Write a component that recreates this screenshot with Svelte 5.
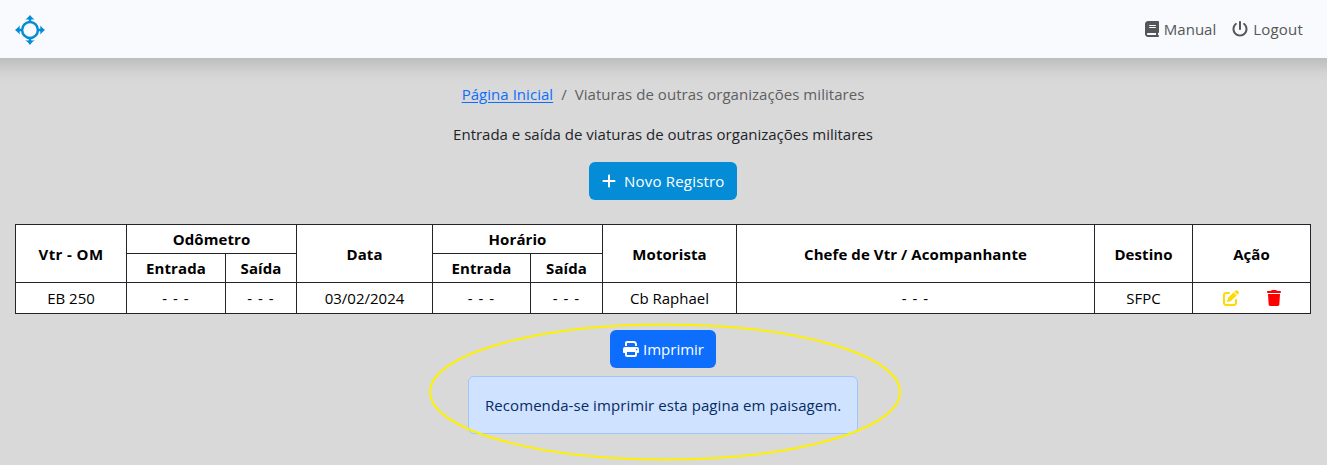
<script>
  const icons = {
    book: ['0 0 448 512', 'M96 0C43 0 0 43 0 96V416c0 53 43 96 96 96H384h32c17.7 0 32-14.3 32-32s-14.3-32-32-32V384c17.7 0 32-14.3 32-32V32c0-17.7-14.3-32-32-32H384 96zm0 384H352v64H96c-17.7 0-32-14.3-32-32s14.3-32 32-32zm32-240c0-8.8 7.2-16 16-16H336c8.8 0 16 7.2 16 16s-7.2 16-16 16H144c-8.8 0-16-7.2-16-16zm16 48H336c8.8 0 16 7.2 16 16s-7.2 16-16 16H144c-8.8 0-16-7.2-16-16s7.2-16 16-16z'],
    power: ['0 0 512 512', 'M288 32c0-17.7-14.3-32-32-32s-32 14.3-32 32V256c0 17.7 14.3 32 32 32s32-14.3 32-32V32zM143.5 120.6c13.6-11.3 15.4-31.5 4.1-45.1s-31.5-15.4-45.1-4.1C49.7 115.4 16 181.8 16 256c0 132.5 107.5 240 240 240s240-107.5 240-240c0-74.2-33.8-140.6-86.6-184.6c-13.6-11.3-33.8-9.4-45.1 4.1s-9.4 33.8 4.1 45.1c38.9 32.3 63.5 81 63.5 135.4c0 97.2-78.8 176-176 176s-176-78.8-176-176c0-54.4 24.7-103.1 63.5-135.4z'],
    plus: ['0 0 448 512', 'M256 80c0-17.7-14.3-32-32-32s-32 14.3-32 32V224H48c-17.7 0-32 14.3-32 32s14.3 32 32 32H192V432c0 17.7 14.3 32 32 32s32-14.3 32-32V288H400c17.7 0 32-14.3 32-32s-14.3-32-32-32H256V80z'],
    printer: ['0 0 512 512', 'M128 0C92.7 0 64 28.7 64 64v96h64V64H354.7L384 93.3V160h64V93.3c0-17-6.7-33.3-18.7-45.3L400 18.7C388 6.7 371.7 0 354.7 0H128zM384 352v32 64H128V384 368 352H384zm64 32h32c17.7 0 32-14.3 32-32V256c0-35.3-28.7-64-64-64H64c-35.3 0-64 28.7-64 64v96c0 17.7 14.3 32 32 32H64v64c0 35.3 28.7 64 64 64H384c35.3 0 64-28.7 64-64V384zM432 248a24 24 0 1 1 0 48 24 24 0 1 1 0-48z'],
    edit: ['0 0 512 512', 'M471.6 21.7c-21.9-21.9-57.3-21.9-79.2 0L362.3 51.7l97.9 97.9 30.1-30.1c21.9-21.9 21.9-57.3 0-79.2L471.6 21.7zm-299.2 220c-6.1 6.1-10.8 13.6-13.5 21.9l-29.6 88.8c-2.9 8.6-.6 18.1 5.8 24.6s15.9 8.7 24.6 5.8l88.8-29.6c8.2-2.7 15.7-7.4 21.9-13.5L437.7 172.3 339.7 74.3 172.4 241.7zM96 64C43 64 0 107 0 160V416c0 53 43 96 96 96H352c53 0 96-43 96-96V320c0-17.7-14.3-32-32-32s-32 14.3-32 32v96c0 17.7-14.3 32-32 32H96c-17.7 0-32-14.3-32-32V160c0-17.7 14.3-32 32-32h96c17.7 0 32-14.3 32-32s-14.3-32-32-32H96z'],
    trash: ['0 0 448 512', 'M135.2 17.7L128 32H32C14.3 32 0 46.3 0 64S14.3 96 32 96H416c17.7 0 32-14.3 32-32s-14.3-32-32-32H320l-7.2-14.3C307.4 6.8 296.3 0 284.2 0H163.8c-12.1 0-23.2 6.8-28.6 17.7zM416 128H32L53.2 467c1.6 25.3 22.6 45 47.9 45H346.9c25.3 0 46.3-19.7 47.9-45L416 128z']
  };
  const columns = [111, 99, 71, 136, 98, 72, 134, 358, 98, 118];
  const rows = [['EB 250', '- - -', '- - -', '03/02/2024', '- - -', '- - -', 'Cb Raphael', '- - -', 'SFPC']];
</script>

{#snippet icon(name)}
  <svg class="icon {name}" viewBox={icons[name][0]} aria-hidden="true"><path d={icons[name][1]} /></svg>
{/snippet}

<div class="page">
  <header>
    <svg class="logo" viewBox="0 0 30 30" aria-hidden="true">
      <circle cx="15" cy="15" r="7.9" fill="none" stroke="#048cd7" stroke-width="2.5" />
      <g fill="#048cd7">
        {#each [0, 90, 180, 270] as angle}
          <path transform="rotate({angle} 15 15)" d="M15 0C15.9 1.2 17.3 2.7 19.6 4.9C18.3 4.5 17.1 4.5 16.2 4.8V7.5H13.8V4.8C12.9 4.5 11.7 4.5 10.4 4.9C12.7 2.7 14.1 1.2 15 0Z" />
        {/each}
      </g>
    </svg>
    <nav>
      <a href="#manual">{@render icon('book')}<span>Manual</span></a>
      <a href="#logout">{@render icon('power')}<span class="logout">Logout</span></a>
    </nav>
  </header>

  <main>
    <div class="breadcrumb">
      <a href="#inicio">Página Inicial</a><span class="slash">/</span><span>Viaturas de outras organizações militares</span>
    </div>
    <p class="title">Entrada e saída de viaturas de outras organizações militares</p>
    <button class="new">{@render icon('plus')}<span>Novo Registro</span></button>

    <table>
      <colgroup>
        {#each columns as width}<col style="width: {width}px" />{/each}
      </colgroup>
      <thead>
        <tr>
          <th class="vehicle" rowspan="2">Vtr - OM</th>
          <th colspan="2">Odômetro</th>
          <th rowspan="2">Data</th>
          <th colspan="2">Horário</th>
          <th rowspan="2">Motorista</th>
          <th rowspan="2">Chefe de Vtr / Acompanhante</th>
          <th rowspan="2">Destino</th>
          <th rowspan="2">Ação</th>
        </tr>
        <tr><th>Entrada</th><th>Saída</th><th>Entrada</th><th>Saída</th></tr>
      </thead>
      <tbody>
        {#each rows as row}
          <tr>
            {#each row as cell}<td class:empty={cell === '- - -'}>{cell}</td>{/each}
            <td><div class="actions">{@render icon('edit')}{@render icon('trash')}</div></td>
          </tr>
        {/each}
      </tbody>
    </table>

    <section class="printing">
      <button class="print">{@render icon('printer')}<span>Imprimir</span></button>
      <div class="alert">Recomenda-se imprimir esta pagina em paisagem.</div>
      <svg class="ring" viewBox="0 0 474 140" aria-hidden="true">
        <ellipse cx="237" cy="70" rx="235" ry="67.5" fill="none" stroke="#fff200" stroke-width="2" />
      </svg>
    </section>
  </main>
</div>

<style>
  :global(body) {
    margin: 0;
    background: #d9d9d9;
  }
  .page { height: 465px; overflow: hidden; }
  .page, button {
    font-family: "Open Sans", sans-serif;
    font-size: 15px;
    line-height: 24px;
  }
  header {
    position: relative;
    box-sizing: border-box;
    height: 58px;
    margin: 0 -30px;
    padding: 0 54px 0 45px;
    display: flex;
    align-items: center;
    justify-content: space-between;
    background: #f8fafd;
    box-shadow: 0 8px 16px rgba(0, 0, 0, 0.15);
  }
  .logo { width: 30px; height: 30px; margin-top: 2px; }
  nav { display: flex; gap: 16px; }
  nav a {
    display: flex;
    align-items: center;
    gap: 5px;
    color: #555657;
    text-decoration: none;
  }
  .logout { letter-spacing: 0.2px; }
  .icon { display: block; height: 16px; fill: currentColor; flex: none; }
  .book, .plus, .trash { width: 14px; }
  .power, .printer, .edit { width: 16px; }
  nav .icon { margin-top: -1px; }
  main {
    padding: 24px 16px 0 15px;
    display: flex;
    flex-direction: column;
    align-items: center;
    color: #212529;
  }
  .breadcrumb { display: flex; color: #5c5f63; letter-spacing: 0.04px; }
  .breadcrumb a { color: #0d6efd; text-underline-offset: 2px; }
  .slash { margin: 0 8px; }
  .title { margin: 16px 0; }
  button {
    box-sizing: border-box;
    height: 38px;
    padding: 0 12px;
    border: 0;
    border-radius: 6px;
    display: flex;
    align-items: center;
    flex: none;
    color: #fff;
  }
  .new { width: 148px; padding-left: 13px; gap: 8px; background: #048cd7; letter-spacing: 0.2px; }
  .print { width: 106px; padding-left: 13px; gap: 4px; background: #0d6efd; }
  table {
    width: 1296px;
    margin-top: 24px;
    table-layout: fixed;
    border-collapse: collapse;
    background: #fff;
    color: #000;
    text-align: center;
  }
  th, td { padding: 0; border: 1px solid #212529; white-space: nowrap; }
  th { height: 28px; font-weight: 700; letter-spacing: 0.08px; }
  .vehicle { letter-spacing: 0.4px; }
  td { height: 30px; }
  .empty { letter-spacing: 1px; }
  .actions { display: flex; justify-content: center; gap: 28px; }
  .edit { color: #ffd900; }
  .trash { color: #f00; }
  .printing {
    position: relative;
    margin-top: 16px;
    display: flex;
    flex-direction: column;
    align-items: center;
    gap: 8px;
  }
  .alert {
    box-sizing: border-box;
    width: 390px;
    height: 58px;
    padding: 16px;
    border: 1px solid #9ec5fe;
    border-radius: 6px;
    background: #cfe2ff;
    color: #052c65;
    letter-spacing: 0.07px;
    white-space: nowrap;
  }
  .ring {
    position: absolute;
    left: -40px;
    top: -8px;
    width: 474px;
    height: 140px;
    pointer-events: none;
  }
</style>
